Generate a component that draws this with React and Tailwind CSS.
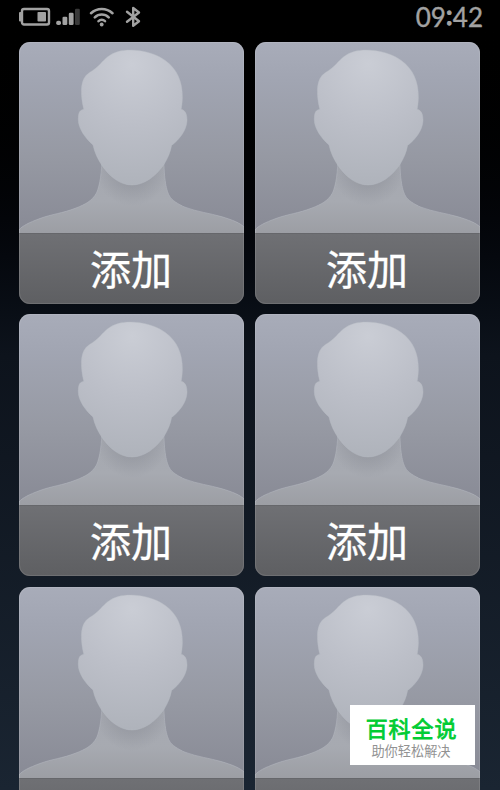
import React from "react";

const HEAD =
  "M111.3 8 C125 8 138 12 147 19 C158 27 163.8 40 163.4 56 C163.3 60 162.8 64 162.2 67.3 C166.5 68 168.3 73 168 79 C167.5 88 161 97 152.6 103.5 C151.5 110 148.5 117 144.6 123 C136 135 125 143 113 143 C101 143 91 135 83 123.5 C78.5 117 75.5 110 74 103 C66 96 59.3 86 59.3 78 C59.2 72 60 68 64.8 67.3 C63.5 62 62.3 56 62.4 48 C62.7 40 65 34 70.5 30.5 C80 25 83 19 89 14.5 C95 10 102 8 111.3 8 Z";

const BODY =
  "M83 112 C83 130 81 143 77.5 151 C73 159 66 162.5 57 166 C43 171.5 33 172 21 176.5 C10 180.5 3 184 0 188 L0 192 L226 192 L226 186 C222 181 212 177.5 203 174.8 C190 171 179 170 166 165.2 C159 162 153 158.5 150.5 154 C146.5 147 145 134 144.6 112 Z";

function Avatar({ id }) {
  const bg = `bg-${id}`;
  const head = `head-${id}`;
  const body = `body-${id}`;
  const shade = `shade-${id}`;
  const clip = `clip-${id}`;
  return (
    <svg viewBox="0 0 226 191" className="block h-[191px] w-[226px] shrink-0">
      <defs>
        <linearGradient id={bg} x1="0" y1="0" x2="0" y2="1">
          <stop offset="0" stopColor="#a8acb9" />
          <stop offset="0.2" stopColor="#a1a5b2" />
          <stop offset="0.6" stopColor="#9699a3" />
          <stop offset="1" stopColor="#888a95" />
        </linearGradient>
        <radialGradient id={head} gradientUnits="userSpaceOnUse" cx="113" cy="22" r="120">
          <stop offset="0" stopColor="#cacdd5" />
          <stop offset="0.5" stopColor="#bcbfc8" />
          <stop offset="1" stopColor="#afb3bb" />
        </radialGradient>
        <linearGradient id={body} gradientUnits="userSpaceOnUse" x1="0" y1="120" x2="0" y2="191">
          <stop offset="0" stopColor="#a5a8b0" />
          <stop offset="0.55" stopColor="#a7aab1" />
          <stop offset="1" stopColor="#9c9ea4" />
        </linearGradient>
        <radialGradient id={shade} gradientUnits="userSpaceOnUse" cx="113" cy="128" r="36">
          <stop offset="0.3" stopColor="#80838c" stopOpacity="0.42" />
          <stop offset="1" stopColor="#80838c" stopOpacity="0" />
        </radialGradient>
        <clipPath id={clip}>
          <path d={BODY} />
        </clipPath>
      </defs>
      <rect width="226" height="191" fill={`url(#${bg})`} />
      <path d={BODY} fill={`url(#${body})`} stroke="#b3b6be" strokeOpacity="0.6" />
      <circle cx="113" cy="128" r="36" fill={`url(#${shade})`} clipPath={`url(#${clip})`} />
      <path d={HEAD} fill={`url(#${head})`} stroke="#babdc6" strokeOpacity="0.5" strokeWidth="0.8" />
    </svg>
  );
}

function ContactCard({ id }) {
  return (
    <button className="relative flex h-[262px] w-[225.6px] flex-col overflow-hidden rounded-[11px] bg-[#606164]">
      <Avatar id={id} />
      <span className="flex h-[71px] w-full items-center justify-center border-t border-[#66676b] bg-linear-to-b from-[#6f7074] to-[#5e5f62] pb-[3px] pr-px text-[41px] leading-none text-white [-webkit-text-stroke:0.3px_white]">
        添加
      </span>
      <span className="pointer-events-none absolute inset-0 rounded-[11px] border border-white/10" />
    </button>
  );
}

function StatusBar() {
  return (
    <header className="flex h-[42px] items-start justify-between pl-[18px] pr-[17px]">
      <svg viewBox="0 0 124 34" className="h-[34px] w-[124px]" fill="none" stroke="#a2a2a2">
        <rect x="4" y="9" width="27" height="15.5" rx="2" strokeWidth="2.4" />
        <rect x="1" y="12" width="2.6" height="9.5" rx="1" fill="#a2a2a2" stroke="none" />
        <rect x="19.5" y="12" width="8.5" height="9.5" rx="0.8" fill="#a2a2a2" stroke="none" />
        <g fill="#a2a2a2" stroke="none">
          <rect x="38.2" y="20.7" width="4.8" height="4.4" rx="1.8" />
          <rect x="44.5" y="16.7" width="4.8" height="8.4" rx="1.3" />
          <rect x="50.8" y="12.7" width="4.8" height="12.4" rx="1.3" />
          <rect x="57" y="8.8" width="4.8" height="16.3" rx="1.3" fill="#393939" />
        </g>
        <g strokeWidth="2.6" strokeLinecap="round">
          <path d="M73 13.2 C79 7.5 88.5 7.5 94.5 13.2" />
          <path d="M76.8 17.4 C80.7 13.6 86.8 13.6 90.7 17.4" />
          <path d="M80.5 21.1 C82.3 19.5 85.2 19.5 87 21.1" />
        </g>
        <circle cx="83.7" cy="24.5" r="1.9" fill="#a2a2a2" stroke="none" />
        <path
          d="M109 11.8 L121 21.3 L115.2 25.8 L115.2 8 L121 12.5 L109 21.8"
          strokeWidth="2.4"
          strokeLinecap="round"
          strokeLinejoin="round"
        />
      </svg>
      <time className="flex h-[33px] items-center whitespace-nowrap font-['Lato'] text-[26px] leading-none text-[#a2a2a2] [-webkit-text-stroke:0.4px_#a2a2a2]">
        09
        <span className="w-[7px] pb-[4px] text-center [-webkit-text-stroke:1.4px_#a2a2a2]">:</span>
        42
      </time>
    </header>
  );
}

function Watermark() {
  return (
    <aside className="absolute left-[350px] top-[705px] flex h-[60px] w-[125px] flex-col items-center bg-white pt-[11px]">
      <strong className="pr-[2px] text-[22px] font-normal leading-[23px] tracking-[0.9px] text-[#00cc33] [-webkit-text-stroke:0.8px_#00cc33]">
        百科全说
      </strong>
      <span className="mt-[5px] pr-[3px] text-[13.2px] leading-[14px] text-[#929292]">助你轻松解决</span>
    </aside>
  );
}

export default function App() {
  return (
    <main className="relative h-[790px] w-[500px] overflow-hidden bg-linear-to-b from-black via-[#0d131c] via-45% to-[#1a2532] font-['Noto_Sans_CJK_SC',sans-serif]">
      <StatusBar />
      <section className="ml-[18.7px] grid w-[462px] grid-cols-[226px_226px] gap-x-[10px] gap-y-[10.4px]">
        {["a", "b", "c", "d", "e", "f"].map((id) => (
          <ContactCard key={id} id={id} />
        ))}
      </section>
      <Watermark />
    </main>
  );
}
